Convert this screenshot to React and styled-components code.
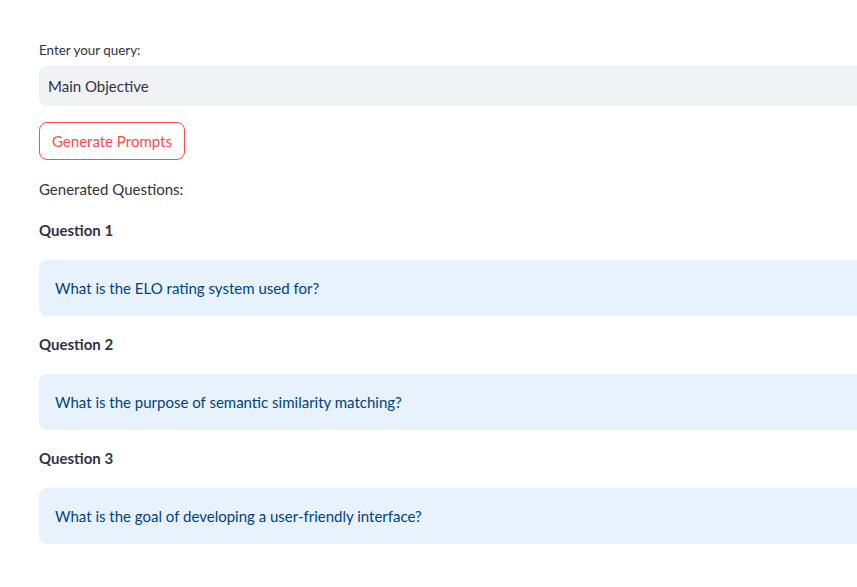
import React from 'react';
import styled, { createGlobalStyle } from 'styled-components';

const GlobalStyle = createGlobalStyle`
  html, body {
    margin: 0;
    padding: 0;
    background: #fff;
    overflow: hidden;
  }
  body {
    font-family: Lato, "Noto Sans", sans-serif;
    color: #31333f;
  }
`;

const Main = styled.div`
  width: 960px;
  padding: 40px 0 0 39px;
  display: flex;
  flex-direction: column;
`;

const Label = styled.label`
  font-size: 13.4px;
  line-height: 20px;
  margin-bottom: 6px;
`;

const Input = styled.div`
  height: 40px;
  background: #f0f2f6;
  border-radius: 8px;
  display: flex;
  align-items: center;
  padding: 0 9px;
  font-size: 15px;
`;

const Button = styled.button`
  align-self: flex-start;
  margin-top: 16px;
  height: 38px;
  padding: 0 12px;
  border: 1px solid #ff4b4b;
  border-radius: 8px;
  background: #fff;
  color: #ff4b4b;
  font-family: inherit;
  font-size: 15px;
`;

const Text = styled.div`
  margin-top: 17px;
  font-size: 15px;
  line-height: 24px;
`;

const Heading = styled.div`
  margin-top: ${p => p.$first ? 17 : 16}px;
  font-size: 15px;
  font-weight: 700;
  line-height: 24px;
`;

const Info = styled.div`
  margin-top: 18px;
  height: 56px;
  border-radius: 8px;
  background: #e8f2fc;
  color: #004280;
  display: flex;
  align-items: center;
  padding: 0 16px;
  font-size: 15px;
`;

const questions = [
  'What is the ELO rating system used for?',
  'What is the purpose of semantic similarity matching?',
  'What is the goal of developing a user-friendly interface?',
];

export default function App() {
  return (
    <>
      <GlobalStyle />
      <Main>
        <Label>Enter your query:</Label>
        <Input>Main Objective</Input>
        <Button>Generate Prompts</Button>
        <Text>Generated Questions:</Text>
        {questions.map((q, i) => (
          <React.Fragment key={i}>
            <Heading $first={i === 0}>Question {i + 1}</Heading>
            <Info>{q}</Info>
          </React.Fragment>
        ))}
      </Main>
    </>
  );
}
